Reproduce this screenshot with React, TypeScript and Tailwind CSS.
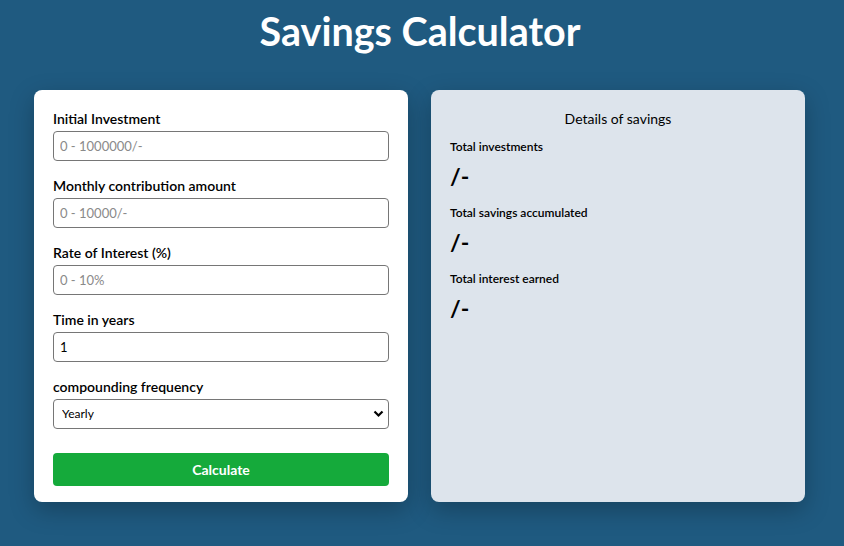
const fields = [
  { label: "Initial Investment", placeholder: "0 - 1000000/-", value: "" },
  { label: "Monthly contribution amount", placeholder: "0 - 10000/-", value: "" },
  { label: "Rate of Interest (%)", placeholder: "0 - 10%", value: "" },
  { label: "Time in years", placeholder: "", value: "1" },
];

const results = ["Total investments", "Total savings accumulated", "Total interest earned"];

export default function App() {
  return (
    <div className="min-h-[546px] bg-[#1f5a80] font-['Lato',sans-serif] text-black">
      <h1 className="pr-[4px] pt-[7px] text-center text-[39.5px] font-bold leading-[48px] text-white">Savings Calculator</h1>

      <div className="mt-[35px] flex gap-[23px] pl-[34px]">
        {/* form */}
        <div className="flex h-[412px] w-[374px] flex-col rounded-lg bg-white px-[19px] pt-[19px] shadow-[0_8px_24px_rgba(0,0,0,0.25)]">
          {fields.map((f) => (
            <div key={f.label} className="mb-[15px] last:mb-[14px]">
              <label className="block text-[14px] font-semibold leading-[20px]">{f.label}</label>
              <input
                className="mt-[2px] h-[30px] w-full rounded border border-[#767676] px-[6px] text-[13px] placeholder:text-[#8a8a8a]"
                placeholder={f.placeholder}
                defaultValue={f.value}
              />
            </div>
          ))}
          <div>
            <label className="block text-[14px] font-semibold leading-[20px]">compounding frequency</label>
            <div className="relative mt-[2px]">
              <select className="h-[30px] w-full appearance-none rounded border border-[#767676] bg-white px-[8px] text-[12px]">
                <option>Yearly</option>
                <option>Half-yearly</option>
                <option>Quarterly</option>
                <option>Monthly</option>
              </select>
              <svg className="pointer-events-none absolute right-[5px] top-[10px]" width="11" height="9" viewBox="0 0 11 9">
                <path d="M1.5 2.5 L5.5 6.5 L9.5 2.5" fill="none" stroke="black" strokeWidth="2.2" />
              </svg>
            </div>
          </div>
          <button className="mt-[24px] h-[33px] w-full rounded bg-[#15aa3b] text-[14px] font-bold text-white">Calculate</button>
        </div>

        {/* results */}
        <div className="h-[412px] w-[374px] rounded-lg bg-[#dde4ec] px-[19px] pt-[19px] shadow-[0_8px_24px_rgba(0,0,0,0.25)]">
          <h2 className="text-center text-[14px] leading-[20px]">Details of savings</h2>
          <div className="mt-[9px] flex flex-col gap-[14px]">
            {results.map((r) => (
              <div key={r}>
                <div className="text-[12px] font-semibold leading-[18px]">{r}</div>
                <div className="mt-[6px] text-[23px] font-bold leading-[28px]">/-</div>
              </div>
            ))}
          </div>
        </div>
      </div>
    </div>
  );
}
